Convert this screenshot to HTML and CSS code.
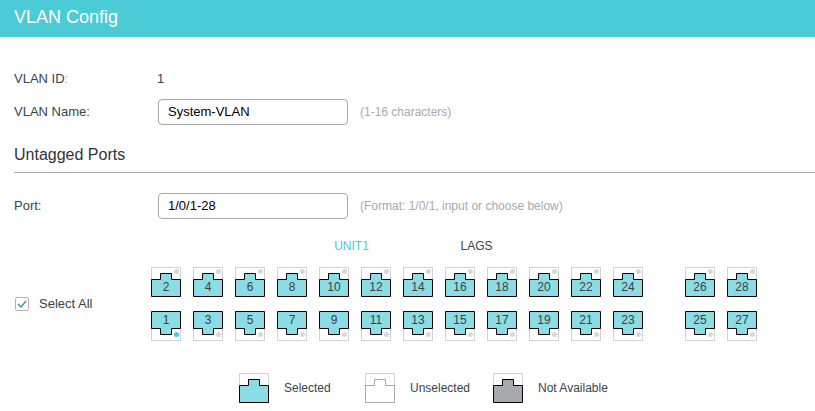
FILE: index.html
```html
<!DOCTYPE html>
<html lang="en">
<head>
<meta charset="utf-8">
<title>VLAN Config</title>
<link rel="stylesheet" href="styles.css">
</head>
<body>
<svg class="defs" aria-hidden="true">
  <symbol id="up" viewBox="0 0 30 30">
    <rect class="frame" x=".5" y=".5" width="29" height="29"/>
    <path class="jack" d="M.5 29.5V12.5H9.5V6.5H20.5V12.5H29.5V29.5Z"/>
  </symbol>
  <symbol id="down" viewBox="0 0 30 30">
    <rect class="frame" x=".5" y=".5" width="29" height="29"/>
    <path class="jack" d="M.5 .5V17.5H9.5V23.5H20.5V17.5H29.5V.5Z"/>
  </symbol>
</svg>
<header class="title-bar"><h1>VLAN Config</h1></header>
<main>
  <div class="row id-row"><span class="label">VLAN ID<span class="faint">:</span></span><span class="value">1</span></div>
  <div class="row"><label class="label" for="name">VLAN Name:</label><input class="text" id="name" type="text" value="System-VLAN"><span class="hint">(1-16 characters)</span></div>
  <h2>Untagged Ports</h2>
  <div class="row"><label class="label" for="port">Port:</label><input class="text" id="port" type="text" value="1/0/1-28"><span class="hint">(Format: 1/0/1, input or choose below)</span></div>
  <nav class="tabs"><button type="button" class="tab active">UNIT1</button><button type="button" class="tab">LAGS</button></nav>
  <div class="chooser">
    <label class="select-all"><input type="checkbox" checked><svg class="tick" viewBox="0 0 14 14" aria-hidden="true"><path d="M3 7L6 10L11 4"/></svg>Select All</label>
    <div class="ports" id="ports"></div>
  </div>
  <ul class="legend">
    <li class="selected"><svg class="icon" aria-hidden="true"><use href="#up"/></svg>Selected</li>
    <li class="unselected"><svg class="icon" aria-hidden="true"><use href="#up"/></svg>Unselected</li>
    <li class="unavailable"><svg class="icon" aria-hidden="true"><use href="#up"/></svg>Not Available</li>
  </ul>
</main>
<script src="ports.js"></script>
</body>
</html>
```
FILE: ports.js
```js
const groups = [[1, 24], [25, 28]];
const linked = new Set([1]);

function port(n) {
  const top = n % 2 === 0;
  return `<button type="button" class="port selected ${top ? "top" : "bottom"}" aria-label="Port ${n}">
    <svg class="icon" aria-hidden="true"><use href="#${top ? "up" : "down"}"/><circle class="led${linked.has(n) ? " on" : ""}" cx="25.5" cy="${top ? 4.5 : 23.5}" r="2.5"/></svg>
    <span class="number">${n}</span></button>`;
}

document.getElementById("ports").innerHTML = groups.map(([first, last]) => {
  let html = "";
  for (let n = first; n < last; n += 2) html += port(n + 1) + port(n);
  return `<div class="group">${html}</div>`;
}).join("");
```
FILE: styles.css
```css
* { box-sizing: border-box; }

body {
  margin: 0;
  background: #fff;
  color: #36444b;
  font: 13px/16px "Liberation Sans", Arial, sans-serif;
}

button {
  padding: 0;
  border: 0;
  background: none;
  color: inherit;
  font: inherit;
}

.defs { position: absolute; width: 0; height: 0; }

.title-bar {
  padding: 7px 14px 10px;
  background: #4acbd6;
  color: #fff;
}

h1 { margin: 0; font-size: 18px; font-weight: 400; line-height: 20px; }

main { padding-left: 14px; }

.row { display: flex; align-items: center; min-height: 26px; }
.id-row { margin-top: 29px; margin-bottom: 7px; }
.label { width: 144px; }
.id-row .label { width: 143px; }
.faint { color: #a7a9ac; }

.text {
  width: 190px;
  height: 26px;
  padding: 0 9px 2px;
  border: 1px solid #a7a9ac;
  border-radius: 4px;
  background: #fff;
  color: #000;
  font: inherit;
}

.hint { margin-left: 12px; color: #a7a9ac; font-size: 12px; }

h2 {
  margin: 20px 0;
  padding-bottom: 8px;
  border-bottom: 1px solid #a7a9ac;
  color: #333;
  font-size: 16px;
  font-weight: 400;
  line-height: 19px;
}

.tabs { display: flex; margin-top: 19px; padding-left: 275px; font-size: 12px; }
.tab { width: 125px; height: 16px; }
.active { color: #4acbd6; }

.chooser { display: flex; align-items: center; margin-top: 13px; }

.select-all { display: flex; align-items: center; position: relative; width: 137px; }

.select-all input {
  appearance: none;
  width: 14px;
  height: 14px;
  margin: 0 10px 0 1px;
  border: 1px solid #b4b6b8;
  border-radius: 2px;
}

.tick { position: absolute; left: 1px; width: 14px; height: 14px; fill: none; stroke: #2c8ba6; stroke-width: 1.2; visibility: hidden; }
input:checked + .tick { visibility: visible; }

.ports { display: flex; gap: 42px; }
.group { display: grid; grid-template-rows: 30px 30px; grid-auto-flow: column; gap: 14px 12px; }

.port { position: relative; display: flex; justify-content: center; width: 30px; height: 30px; font-size: 12px; line-height: 18px; color: #414042; }
.port .icon { position: absolute; inset: 0; }
.number { position: relative; }
.top { align-items: flex-end; padding-bottom: 1px; }
.bottom { align-items: flex-start; }

.icon { display: block; width: 30px; height: 30px; }
.frame { fill: #fff; stroke: #d1d3d4; }
.jack { fill: var(--fill); stroke: var(--line); }
.led { fill: #d8d8d8; }
.led.on { fill: #4acbd6; }

.selected { --fill: #8adde4; --line: #000; }
.unselected { --fill: #fff; --line: #a7a9ac; }
.unavailable { --fill: #a7a9ac; --line: #000; }

.legend {
  display: grid;
  grid-template-columns: 126px 128px auto;
  justify-content: start;
  margin: 32px 0 0;
  padding: 0 0 0 225px;
  list-style: none;
  font-size: 12px;
}

.legend li { display: flex; align-items: center; gap: 15px; }
```
